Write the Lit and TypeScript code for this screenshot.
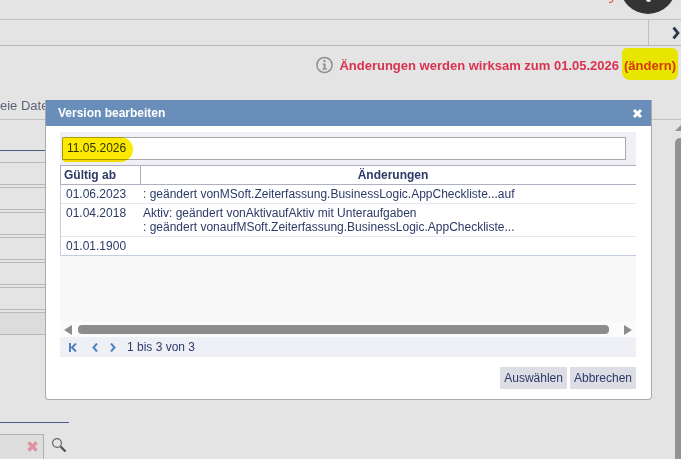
import { LitElement, html, css } from 'lit';
import { customElement } from 'lit/decorators.js';

const rows = [
    { date: '01.06.2023', lines: [': geändert vonMSoft.Zeiterfassung.BusinessLogic.AppCheckliste...auf'] },
    { date: '01.04.2018', lines: ['Aktiv: geändert vonAktivaufAktiv mit Unteraufgaben', ': geändert vonaufMSoft.Zeiterfassung.BusinessLogic.AppCheckliste...'] },
    { date: '01.01.1900', lines: [] as string[] },
];

@customElement('app-root')
export class AppRoot extends LitElement {
    public static override styles = css`
        :host {
            display: block;
            position: relative;
            width: 681px;
            height: 459px;
            overflow: hidden;
            background: #e4e4e4;
            font-family: "Liberation Sans", Arial, sans-serif;
            font-size: 12px;
            color: #2b3a67;
        }

        .top {
            height: 19px;
            border-bottom: 1px solid #c0c0c0;
        }

        .avatar {
            position: absolute;
            left: 620px;
            top: -42px;
            width: 56px;
            height: 56px;
            border-radius: 50%;
            background: #333;
        }

        .avatar-dot {
            position: absolute;
            left: 646px;
            top: -3px;
            width: 5px;
            height: 5px;
            border-radius: 50%;
            background: #e8e8e8;
        }

        .red-tick {
            position: absolute;
            left: 609px;
            top: 0;
        }

        .toolbar {
            display: flex;
            justify-content: flex-end;
            height: 25px;
            border-bottom: 1px solid #b8b8b8;
        }

        .toolbar-end {
            display: flex;
            align-items: center;
            justify-content: flex-end;
            width: 31px;
            padding-right: 1px;
            border-left: 1px solid #c0c0c0;
        }

        .notice {
            display: flex;
            height: 73px;
            flex-direction: column;
            border-bottom: 1px solid #c0c0c0;
        }

        .notice-line {
            display: flex;
            align-items: center;
            justify-content: flex-end;
            gap: 6px;
            height: 38px;
            padding-right: 3px;
            font-size: 13px;
            font-weight: bold;
            color: #d8324f;
        }

        .notice-text {
            line-height: 15px;
            white-space: nowrap;
        }

        .mark {
            display: inline-block;
            margin: -10px 0 -7px 3px;
            padding: 10px 2px 7px 2px;
            background: #e8e600;
            border-radius: 5px 6px 6px 8px;
            color: #d8360f;
        }

        .cut-label {
            margin-top: 14px;
            font-size: 13px;
            color: #5a6378;
            white-space: nowrap;
        }

        .left {
            width: 45px;
        }

        .blue-rule {
            margin-top: 30px;
            height: 1px;
            width: 200px;
            background: #4c6088;
        }

        .left-rows {
            display: flex;
            flex-direction: column;
            gap: 2px;
            margin-top: 11px;
        }

        .left-row {
            height: 21px;
            border-top: 1px solid #b8b8b8;
            border-bottom: 1px solid #b8b8b8;
        }

        .left-row.shaded {
            background: #dcdcdc;
        }

        .search-rule {
            margin-top: 87px;
            height: 1px;
            width: 69px;
            background: #4c6088;
        }

        .search {
            display: flex;
            align-items: flex-start;
            gap: 7px;
            margin-top: 11px;
        }

        .search-box {
            display: flex;
            justify-content: flex-end;
            flex: none;
            width: 44px;
            height: 40px;
            padding: 6px 5px 0 0;
            box-sizing: border-box;
            background: #dedede;
            border: 1px solid #b0b0b0;
            border-left: none;
        }

        .search-glass {
            flex: none;
            margin-top: 3px;
        }

        .page-scroll {
            position: absolute;
            left: 675px;
            top: 125px;
            width: 6px;
        }

        .page-scroll-thumb {
            margin-top: 7px;
            height: 340px;
            background: #929292;
            border-radius: 5px 0 0 0;
        }

        .dialog {
            position: absolute;
            left: 45px;
            top: 100px;
            width: 607px;
            height: 300px;
            box-sizing: border-box;
            display: flex;
            flex-direction: column;
            background: #fff;
            border-right: 1px solid #aaa;
            border-bottom: 1px solid #aaa;
            border-left: 1px solid #aaa;
            border-radius: 0 0 4px 4px;
        }

        .dialog-title {
            display: flex;
            align-items: center;
            justify-content: space-between;
            height: 26px;
            padding: 0 8px 0 12px;
            background: #688eb9;
            color: #fff;
            font-weight: bold;
        }

        .dialog-body {
            display: flex;
            flex-direction: column;
            padding: 6px 15px 0 14px;
        }

        .date-strip {
            height: 33px;
            padding: 5px 10px 0 2px;
            box-sizing: border-box;
            background: #eff0f6;
        }

        .date-input {
            position: relative;
            height: 23px;
            box-sizing: border-box;
            padding-left: 4px;
            line-height: 21px;
            background: #fff;
            border: 1px solid #a8a8a8;
        }

        .date-mark {
            position: absolute;
            left: -1px;
            top: -1px;
            width: 71px;
            height: 25px;
            background: #fde800;
            border-radius: 4px 14px 14px 5px;
            mix-blend-mode: multiply;
        }

        .grid {
            display: grid;
            grid-template-columns: 80px 1fr;
            border-left: 1px solid #c3cde0;
            border-bottom: 1px solid #c3cde0;
        }

        .head {
            height: 18px;
            line-height: 18px;
            font-weight: bold;
            border-top: 1px solid #b0b0c0;
            border-bottom: 1px solid #b0b0c0;
        }

        .head.first {
            padding-left: 3px;
            border-right: 1px solid #b0b0c0;
            margin-left: -1px;
            border-left: 1px solid #b0b0c0;
        }

        .head.second {
            padding-left: 9px;
            text-align: center;
        }

        .cell {
            padding: 2px 0 2px 5px;
            line-height: 14px;
            border-bottom: 1px solid #e4e6f0;
        }

        .cell.last {
            border-bottom: none;
            height: 14px;
        }

        .cell.text {
            padding-left: 2px;
        }

        .blank {
            height: 66px;
            background: #f8f8f8;
        }

        .hscroll {
            display: flex;
            align-items: center;
            height: 15px;
            padding: 0 4px;
            box-sizing: border-box;
            background: #fbfbfb;
        }

        .hscroll-thumb {
            flex: 1;
            height: 9px;
            margin: 0 15px 0 6px;
            background: #8c8c8c;
            border-radius: 4px;
        }

        .pager {
            display: flex;
            align-items: center;
            height: 20px;
            padding-left: 9px;
            background: #eff0f6;
        }

        .pager-first {
            margin-right: 15px;
        }

        .pager-prev {
            margin-right: 12px;
        }

        .pager-next {
            margin-right: 11px;
        }

        .actions {
            display: flex;
            justify-content: flex-end;
            gap: 3px;
            margin-top: 10px;
        }

        .btn {
            height: 22px;
            line-height: 22px;
            padding: 0 4px;
            background: #dcdde5;
        }
    `;

    override render() {
        return html`
            <div class="top"></div>
            <svg class="red-tick" width="6" height="3" viewBox="0 0 6 3"><path d="M0 2.5 L3 2 L4 0" fill="none" stroke="#e33" stroke-width="1"/></svg>
            <div class="avatar"></div>
            <div class="avatar-dot"></div>
            <div class="toolbar">
                <div class="toolbar-end">
                    <svg width="8" height="12" viewBox="0 0 8 12"><path d="M1.5 0.5 L6 6 L1.5 11.5" fill="none" stroke="#2b3a4f" stroke-width="2.8"/></svg>
                </div>
            </div>
            <div class="notice">
                <div class="notice-line">
                    <svg width="17" height="18" viewBox="0 0 17 18">
                        <circle cx="8.5" cy="9" r="7.6" fill="none" stroke="#8f8f8f" stroke-width="1.5"/>
                        <circle cx="8.5" cy="5" r="1.2" fill="#8f8f8f"/>
                        <path d="M6.5 7.6 H9.6 V12.6 H11 V13.8 H6.2 V12.6 H7.6 V8.8 H6.5 Z" fill="#8f8f8f"/>
                    </svg>
                    <span class="notice-text">Änderungen werden wirksam zum 01.05.2026<span class="mark">(ändern)</span></span>
                </div>
                <div class="cut-label">eie Date</div>
            </div>
            <div class="left">
                <div class="blue-rule"></div>
                <div class="left-rows">
                    <div class="left-row"></div>
                    <div class="left-row"></div>
                    <div class="left-row"></div>
                    <div class="left-row"></div>
                    <div class="left-row"></div>
                    <div class="left-row"></div>
                    <div class="left-row shaded"></div>
                </div>
                <div class="search-rule"></div>
                <div class="search">
                    <div class="search-box">
                        <svg width="11" height="11" viewBox="0 0 11 11"><path d="M1.5 1.5 L9.5 9.5 M9.5 1.5 L1.5 9.5" stroke="#e0909f" stroke-width="3.4"/></svg>
                    </div>
                    <svg class="search-glass" width="16" height="16" viewBox="0 0 16 16">
                        <circle cx="6" cy="6" r="4.4" fill="none" stroke="#666" stroke-width="1.2"/>
                        <path d="M9.5 9.5 L14.5 14.5" stroke="#555" stroke-width="2.4"/>
                    </svg>
                </div>
            </div>
            <div class="page-scroll">
                <svg width="6" height="6" viewBox="0 0 6 6" style="display:block"><path d="M0 6 L6 0 V6 Z" fill="#929292"/></svg>
                <div class="page-scroll-thumb"></div>
            </div>
            <div class="dialog">
                <div class="dialog-title">
                    <span>Version bearbeiten</span>
                    <svg width="11" height="11" viewBox="0 0 11 11"><path d="M2 2 L9 9 M9 2 L2 9" stroke="#fff" stroke-width="3"/></svg>
                </div>
                <div class="dialog-body">
                    <div class="date-strip">
                        <div class="date-input">
                            11.05.2026
                            <div class="date-mark"></div>
                        </div>
                    </div>
                    <div class="grid">
                        <div class="head first">Gültig ab</div>
                        <div class="head second">Änderungen</div>
                        ${rows.map((r, i) => {
                            const last = i === rows.length - 1 ? 'last' : '';
                            return html`
                                <div class="cell ${last}">${r.date}</div>
                                <div class="cell text ${last}">${r.lines.map((l) => html`<div>${l}</div>`)}</div>
                            `;
                        })}
                    </div>
                    <div class="blank"></div>
                    <div class="hscroll">
                        <svg width="8" height="10" viewBox="0 0 8 10"><path d="M8 0 V10 L0 5 Z" fill="#8c8c8c"/></svg>
                        <div class="hscroll-thumb"></div>
                        <svg width="8" height="10" viewBox="0 0 8 10"><path d="M0 0 V10 L8 5 Z" fill="#8c8c8c"/></svg>
                    </div>
                    <div class="pager">
                        <svg class="pager-first" width="8" height="9" viewBox="0 0 8 9"><path d="M1 0 V9 M7 0.5 L3 4.5 L7 8.5" fill="none" stroke="#4f81bd" stroke-width="2"/></svg>
                        <svg class="pager-prev" width="6" height="9" viewBox="0 0 6 9"><path d="M5 0.5 L1.5 4.5 L5 8.5" fill="none" stroke="#4f81bd" stroke-width="2"/></svg>
                        <svg class="pager-next" width="6" height="9" viewBox="0 0 6 9"><path d="M1 0.5 L4.5 4.5 L1 8.5" fill="none" stroke="#4f81bd" stroke-width="2"/></svg>
                        <span>1 bis 3 von 3</span>
                    </div>
                    <div class="actions">
                        <div class="btn">Auswählen</div>
                        <div class="btn">Abbrechen</div>
                    </div>
                </div>
            </div>
        `;
    }
}
